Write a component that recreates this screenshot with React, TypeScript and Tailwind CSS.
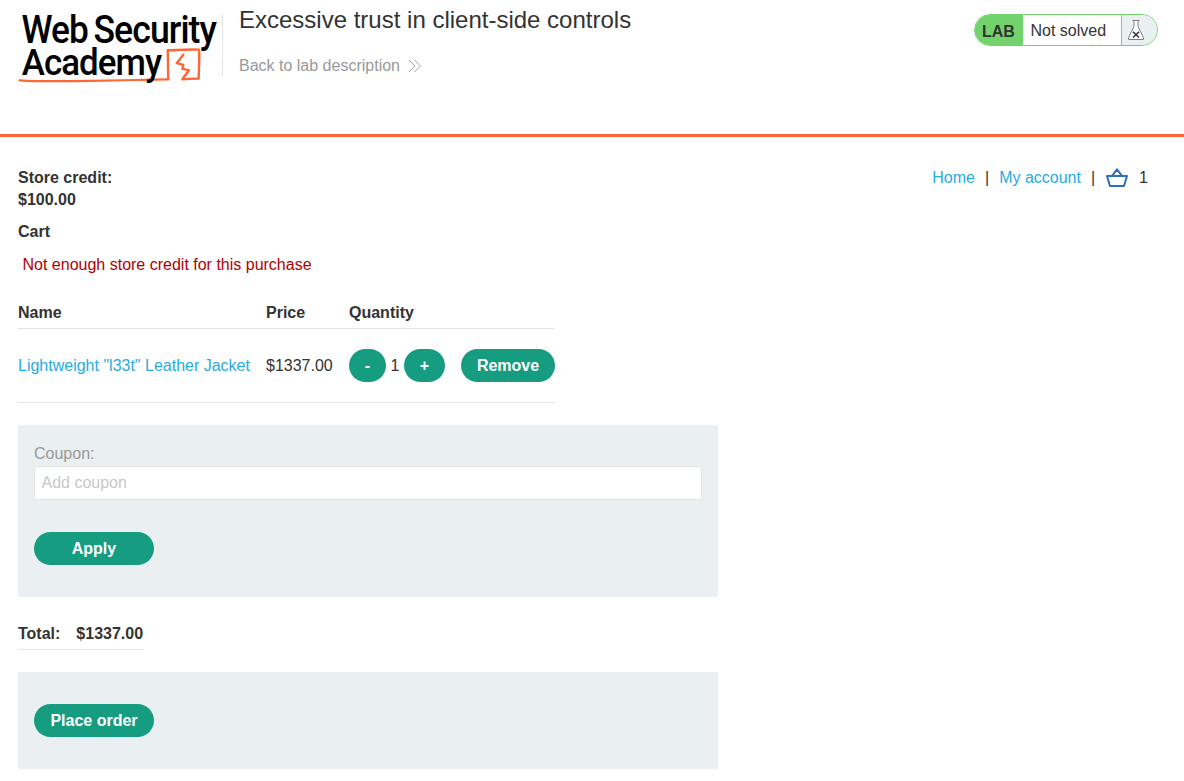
import type { ReactNode } from "react";

function Logo() {
  return (
    <svg width="204" height="86" viewBox="18 0 204 86" className="block shrink-0" aria-label="Web Security Academy">
      <g fill="#000" fontFamily="Roboto, 'Liberation Sans', sans-serif" fontWeight="500" fontSize="38" letterSpacing="-1">
        <text x="21.500" y="42.800" textLength="66.500" lengthAdjust="spacingAndGlyphs">Web</text>
        <text x="93.500" y="42.800" textLength="122.500" lengthAdjust="spacingAndGlyphs">Security</text>
      </g>
      <g fill="none" stroke="#ff6633" strokeLinejoin="round" strokeLinecap="round">
        <path d="M19.500 80.300 C40 81.600 65 81.300 90 80.900 S145 79.600 168 79.400" strokeWidth="2.2" />
        <path d="M168.200 79 C168 69 168 59 167.800 50.300 C178 50 188 49.200 199 49.600 C199.800 60 198.800 69 198.600 78.500 C193 78.600 188 79 182.300 79.200 L188.900 70.200 L182.400 68.800 L183.300 64.800 L176.800 63.200 L183.300 54.600" strokeWidth="2.4" />
      </g>
      <text x="21.700" y="75" textLength="139.500" lengthAdjust="spacingAndGlyphs" letterSpacing="-1" fill="#000" fontFamily="Roboto, 'Liberation Sans', sans-serif" fontWeight="500" fontSize="37">Academy</text>
    </svg>
  );
}

function LabStatus() {
  return (
    <div className="mt-[14px] flex h-8 w-[184px] shrink-0 overflow-hidden rounded-2xl border border-[#72d26c] bg-white">
      <div className="w-12 bg-[#72d26c] pl-[7px] pt-px font-bold leading-8">LAB</div>
      <div className="w-[98px] pl-[7.5px] leading-[31px]">Not solved</div>
      <div className="flex-1 border-l border-[#72d26c] bg-[#eaeff2] pl-[6px] pt-[5px]">
        <svg width="16" height="20" viewBox="0 0 16 20" fill="none" stroke="#808080" strokeWidth="1">
          <path d="M4.500 .5h7M6 .5v5.800L.5 18v1.500h15V18L10 6.300V.5" fill="#fff" />
          <path d="M5 11.700l6 5.800M11 11.700l-6 5.800" stroke="#333" strokeWidth="1.500" />
        </svg>
      </div>
    </div>
  );
}

function Button({ children, className }: { children: ReactNode; className: string }) {
  return (
    <button className={`h-[33px] rounded-full bg-[#169c80] text-center font-bold leading-[33px] text-white ${className}`}>
      {children}
    </button>
  );
}

export default function App() {
  return (
    <div className="h-[781px] w-full overflow-hidden bg-white font-['Liberation_Sans',Arial,sans-serif] text-base leading-[22px] text-[#333332]">
      <header className="flex h-[137px] items-start border-b-3 border-[#ff6633] pl-[18px] pr-[26px]">
        <Logo />
        <div className="mt-[14px] h-[62px] w-px bg-[#e4e4e4]" />
        <div className="flex-1 pl-4">
          <h2 className="mt-[4px] text-2xl leading-8">Excessive trust in client-side controls</h2>
          <a className="mt-[19px] flex items-center text-[#999999]">
            Back to lab description
            <svg width="13" height="14" viewBox="0 0 13 14" fill="none" stroke="#999" strokeWidth="0.9" className="mb-px ml-2">
              <path d="M1 1l6 6-6 6M6.500 1l6 6-6 6" />
            </svg>
          </a>
        </div>
        <LabStatus />
      </header>

      <main className="pl-[18px] pr-9 pt-[30px]">
        <div className="flex items-start justify-between">
          <div className="font-bold">
            <p>Store credit:<br />$100.00</p>
            <h1 className="mt-[10px]">Cart</h1>
          </div>
          <nav className="flex items-center">
            <a className="text-[#29abe2]">Home</a>
            <span className="ml-[10px]">|</span>
            <a className="ml-[10px] text-[#29abe2]">My account</a>
            <span className="ml-[10px]">|</span>
            <svg width="24" height="22" viewBox="0 0 24 22" fill="none" stroke="#2a71b8" strokeWidth="2" strokeLinejoin="round" className="ml-[10px]">
              <path d="M2 9h20L19 19H5L2 9zM7.300 8.700L12 2.300l4.700 6.400" />
            </svg>
            <span className="ml-[10px]">1</span>
          </nav>
        </div>

        <p className="mt-[11px] pl-[4.500px] text-[#b00000]">Not enough store credit for this purchase</p>

        <div className="mt-[26px] grid w-[537px] grid-cols-[248px_83px_112px_94px]">
          <div className="col-span-4 grid h-[27px] grid-cols-subgrid border-b border-[#e4e4e4] font-bold">
            <span>Name</span>
            <span>Price</span>
            <span>Quantity</span>
          </div>
          <div className="col-span-4 grid h-[74px] grid-cols-subgrid items-center border-b border-[#e4e4e4]">
            <a className="text-[#29abe2]">Lightweight &quot;l33t&quot; Leather Jacket</a>
            <span>$1337.00</span>
            <div className="flex items-center">
              <Button className="w-[37px]">-</Button>
              <span className="w-[18px] text-center">1</span>
              <Button className="w-[41px]">+</Button>
            </div>
            <Button className="w-[94px]">Remove</Button>
          </div>
        </div>

        <form className="mt-[22px] h-[172px] w-[700px] bg-[#eaeff2] px-4 pt-[18px]">
          <label htmlFor="coupon" className="block text-[#999999]">Coupon:</label>
          <input
            id="coupon"
            type="text"
            placeholder="Add coupon"
            className="mt-px block h-[34px] w-full border border-[#e4e4e4] bg-white px-[6.500px] placeholder:text-[#c8c8c8]"
          />
          <Button className="mt-8 block w-[120px]">Apply</Button>
        </form>

        <div className="mt-[26px] flex h-[27px] w-[125px] gap-4 border-b border-[#e4e4e4] font-bold">
          <span>Total:</span>
          <span>$1337.00</span>
        </div>

        <div className="mt-[22px] h-[97px] w-[700px] bg-[#eaeff2] px-4 pt-8">
          <Button className="block w-[120px]">Place order</Button>
        </div>
      </main>
    </div>
  );
}
